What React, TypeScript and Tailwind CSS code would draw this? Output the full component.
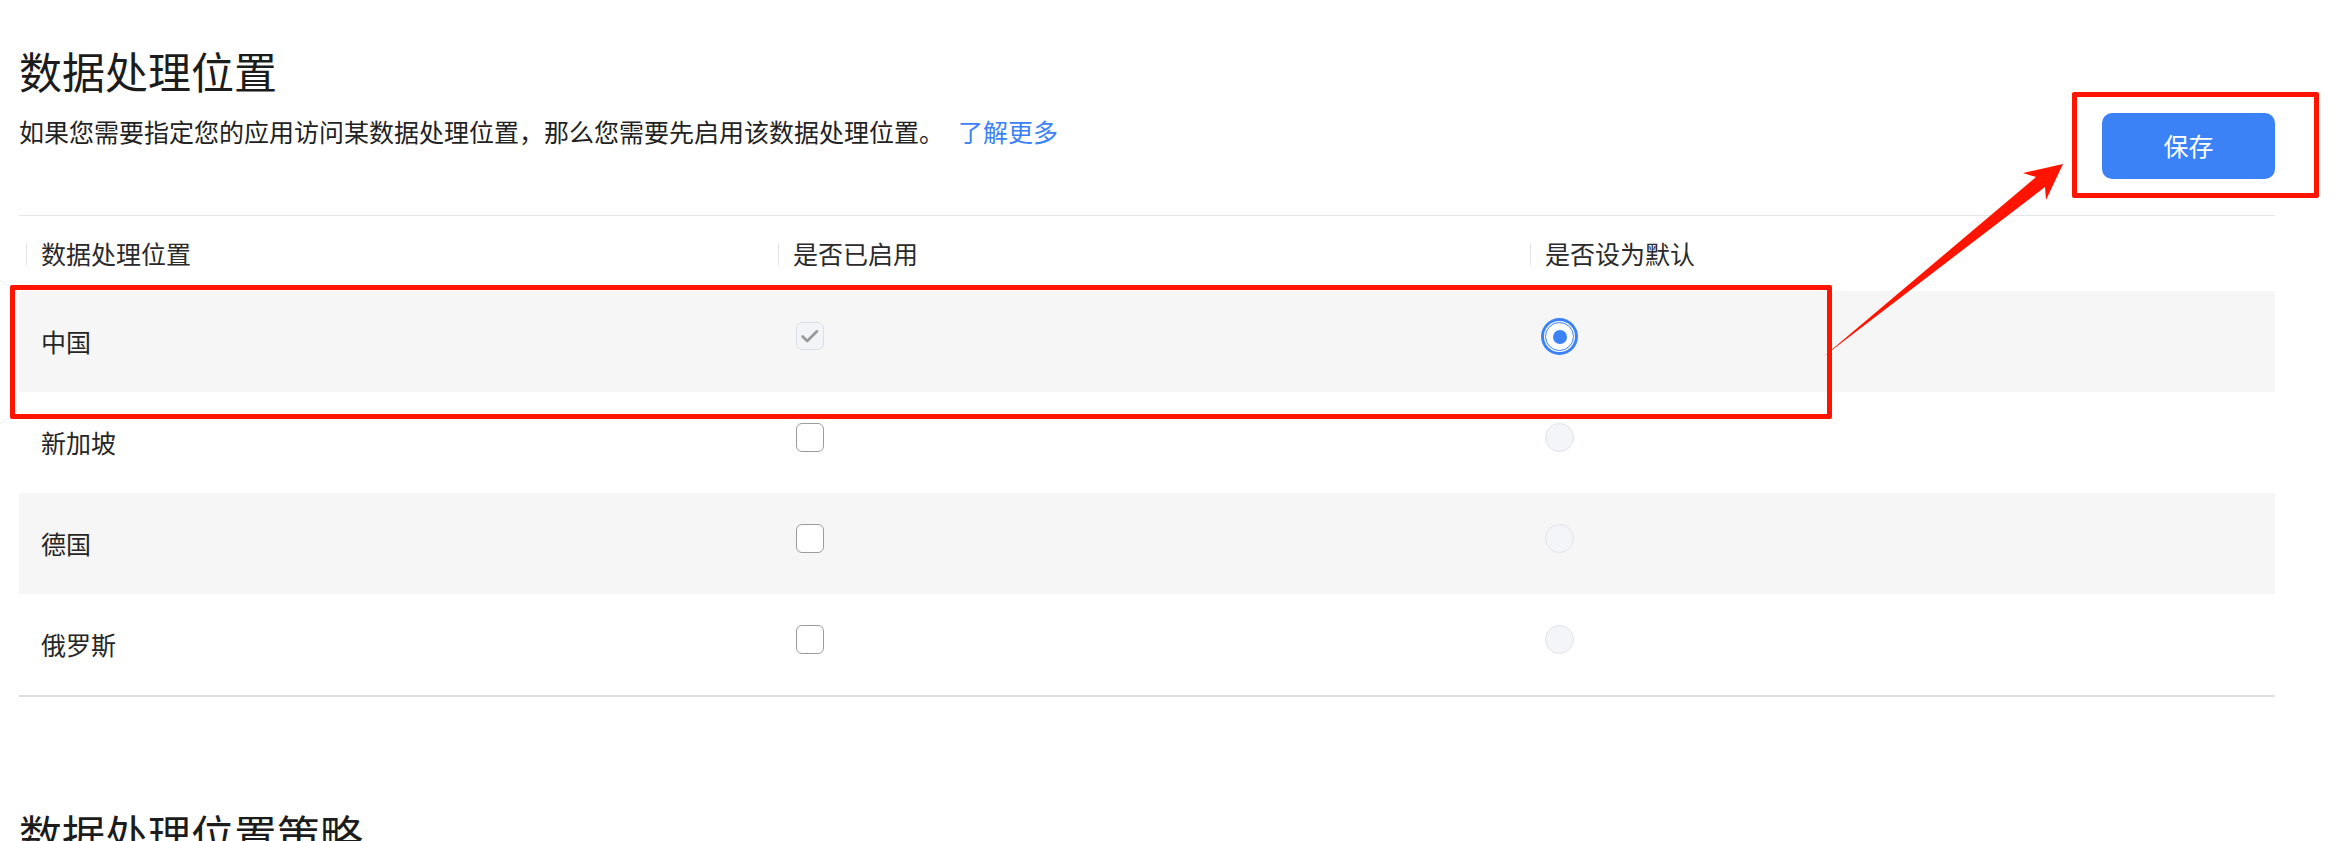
import React, { useState } from 'react';

type Region = {
  name: string;
  enabled: boolean;
  locked?: boolean;
};

const regions: Region[] = [
  { name: '中国', enabled: true, locked: true },
  { name: '新加坡', enabled: false },
  { name: '德国', enabled: false },
  { name: '俄罗斯', enabled: false },
];

const columns = ['数据处理位置', '是否已启用', '是否设为默认'];

const Checkbox: React.FC<{ checked: boolean; disabled?: boolean }> = ({ checked, disabled }) => {
  if (disabled) {
    return (
      <span className="mb-[12px] flex h-[28px] w-[28px] items-center justify-center rounded-[6px] border border-[#dcdfe6] bg-[#f2f4f8]">
        {checked && (
          <svg width="28" height="28" viewBox="0 0 28 28" fill="none">
            <path d="M6 14.5l5 5L21.5 9" stroke="#9b9b9b" strokeWidth="3" strokeLinecap="round" strokeLinejoin="round" />
          </svg>
        )}
      </span>
    );
  }
  return <span className="mb-[10px] block h-[29px] w-[28px] rounded-[6px] border-[1.5px] border-[#9c9c9c] bg-white" />;
};

const Radio: React.FC<{ checked: boolean }> = ({ checked }) => {
  if (checked) {
    return (
      <span className="mb-[10px] flex h-[29px] w-[29px] items-center justify-center rounded-full border border-[#3b82f6] bg-white ring-[3px] ring-[#3b82f6] ring-offset-1 ring-offset-white">
        <span className="h-[14px] w-[14px] rounded-full bg-[#3b82f6]" />
      </span>
    );
  }
  return <span className="mb-[10px] block h-[29px] w-[29px] rounded-full border border-[#e1e3e9] bg-[#f4f5f9]" />;
};

export default function App() {
  const [defaultIdx] = useState(0);

  return (
    <div className="relative min-h-screen overflow-hidden bg-white pl-[19px] pr-[64px] pt-[49px] font-['Noto_Sans_CJK_SC','Noto_Sans',sans-serif] text-[#262626]">
      <div className="flex items-start justify-between">
        <div>
          <h1 className="text-[43px] font-normal leading-[43px] text-[#1c1c1c]">数据处理位置</h1>
          <p className="mt-[27px] text-[25px] leading-[25px] text-[#222]">
            如果您需要指定您的应用访问某数据处理位置，那么您需要先启用该数据处理位置。
            <a className="ml-[14px] text-[#3b82f6]">了解更多</a>
          </p>
        </div>
        <button className="mt-[64px] h-[66px] w-[173px] rounded-[10px] bg-[#3b82f6] text-[25px] text-white">
          保存
        </button>
      </div>

      <div className="mt-[36px] border-t border-[#e6e6e6]">
        <div className="grid h-[75px] grid-cols-3">
          {columns.map((c) => (
            <div key={c} className="flex items-center pl-[7px]">
              <span className="h-[22px] w-px bg-[#e3e3e3]" />
              <span className="ml-[14px] text-[25px] leading-[25px] text-[#2a2a2a]">{c}</span>
            </div>
          ))}
        </div>
        {regions.map((r, i) => (
          <div key={r.name} className={`grid h-[101px] grid-cols-3 ${i % 2 === 0 ? 'bg-[#f6f6f6]' : 'bg-white'}`}>
            <div className="flex items-center pl-[22px] text-[25px] leading-[25px] text-[#262626]">{r.name}</div>
            <div className="flex items-center pl-[25px]">
              <Checkbox checked={r.enabled} disabled={r.locked} />
            </div>
            <div className="flex items-center pl-[22px]">
              <Radio checked={i === defaultIdx} />
            </div>
          </div>
        ))}
        <div className="h-[2px] bg-[#dedede]" />
      </div>

      <h2 className="mt-[115px] text-[43px] font-normal leading-[43px] text-[#1c1c1c]">数据处理位置策略</h2>

      {/* annotations */}
      <div className="pointer-events-none absolute left-[10px] top-[285px] h-[134px] w-[1822px] rounded-[2px] border-[5px] border-[#ff1400]" />
      <div className="pointer-events-none absolute left-[2072px] top-[92px] h-[106px] w-[247px] rounded-[2px] border-[5px] border-[#ff1400]" />
      <svg className="pointer-events-none absolute left-0 top-0" width="2339" height="841" viewBox="0 0 2339 841">
        <path d="M1823 357 L2036 177 L2023 173 L2063 164 L2046 200 L2045 187 Z" fill="#ff1400" />
      </svg>
    </div>
  );
}
